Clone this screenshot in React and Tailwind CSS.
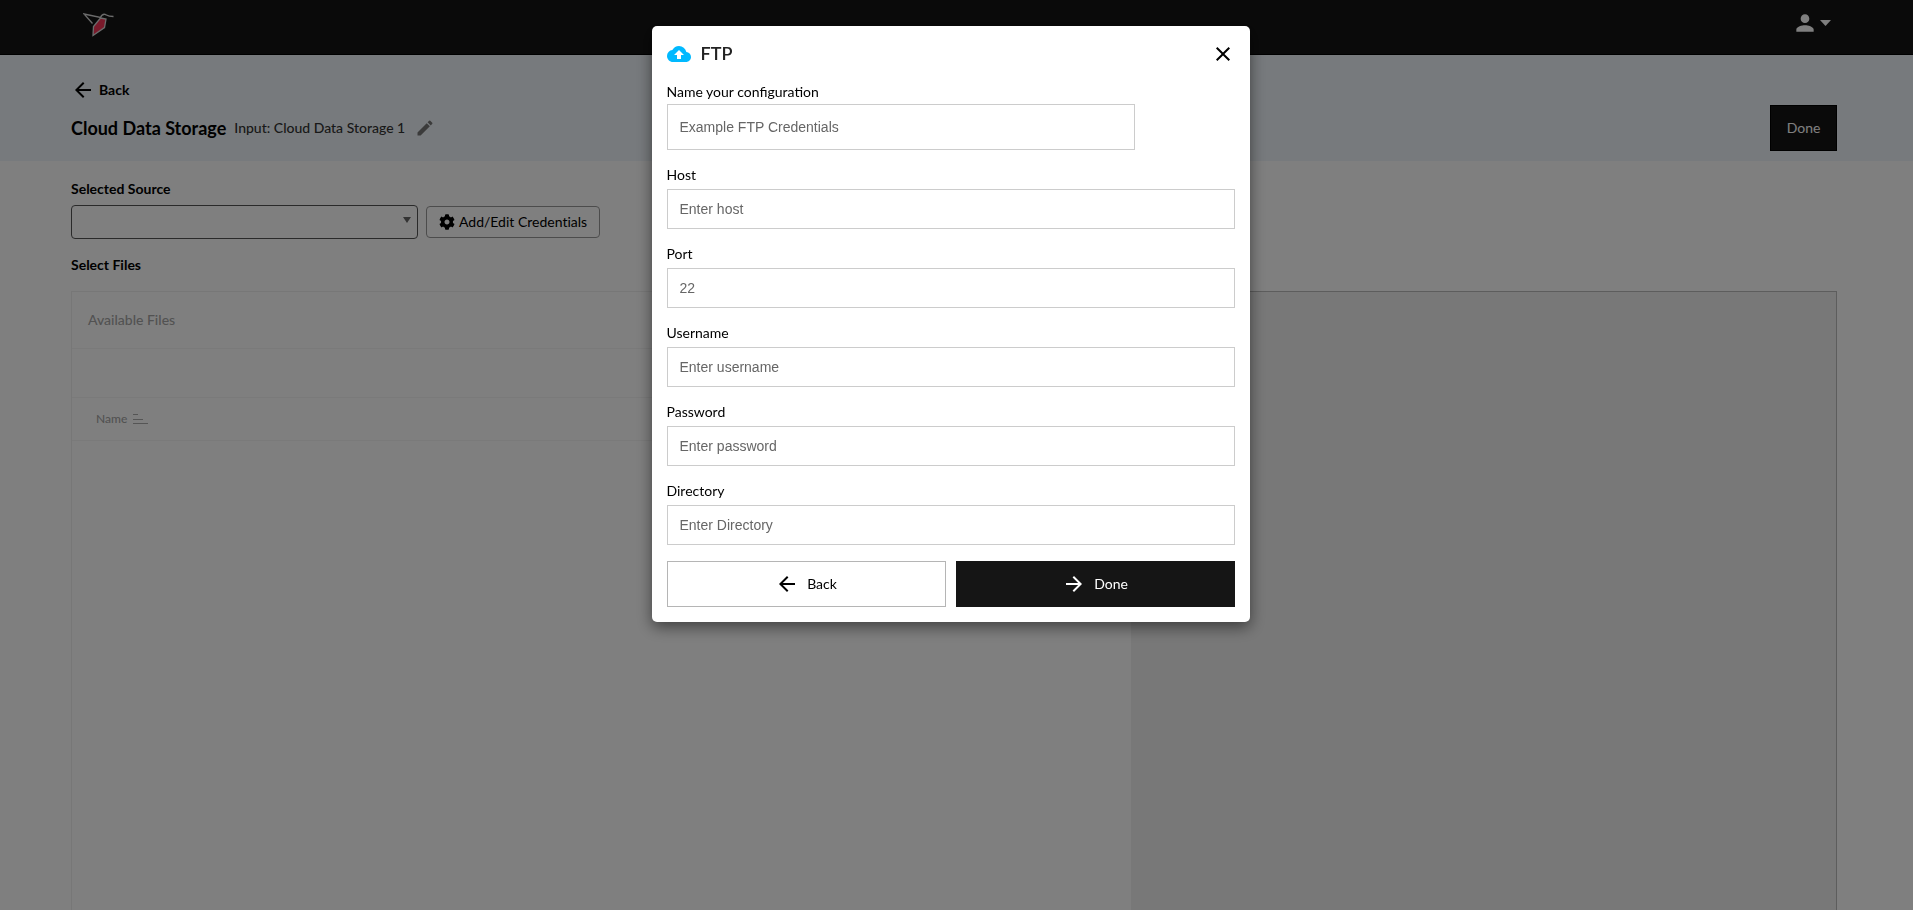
import React, { useState } from 'react';
import { FaCog } from 'react-icons/fa';
import {
  MdArrowBack,
  MdArrowForward,
  MdClose,
  MdCloudUpload,
  MdEdit,
  MdPerson,
} from 'react-icons/md';

const fields = [
  { id: 'host', label: 'Host', placeholder: 'Enter host', type: 'text' },
  { id: 'port', label: 'Port', placeholder: '22', type: 'text' },
  { id: 'username', label: 'Username', placeholder: 'Enter username', type: 'text' },
  { id: 'password', label: 'Password', placeholder: 'Enter password', type: 'password' },
  { id: 'directory', label: 'Directory', placeholder: 'Enter Directory', type: 'text' },
];

const Logo = () => (
  <svg viewBox="0 0 32 24" className="w-8 h-6" fill="none">
    <path d="M17.5 5L23 6L21.5 14.5L10 22.5L10.5 13.5Z" fill="#f43557" stroke="#d8d8d8" strokeWidth="1.3" />
    <path d="M9.5 10.5L1 1L17.5 4.5C18.5 2 20 1 22 1.3C24 2 24 3.5 30.5 3.5" stroke="#d8d8d8" strokeWidth="1.3" />
  </svg>
);

const Navbar = () => (
  <nav className="flex items-center justify-between h-[55px] bg-[#151515] border-b border-black pl-[83px] pr-[82px] pb-1">
    <a href="#" aria-label="Home">
      <Logo />
    </a>
    <button type="button" aria-label="Account" className="flex items-center gap-0.5 pb-1 text-white">
      <MdPerson className="w-[26px] h-[26px]" />
      <svg viewBox="0 0 11 6" className="w-[11px] h-1.5" fill="currentColor">
        <path d="M0 0h11L5.500 6z" />
      </svg>
    </button>
  </nav>
);

const PageHeader = () => (
  <header className="bg-[#eff5fa] h-[106px] pl-[71px] pr-[76px] flex justify-between">
    <div className="pt-[23px]">
      <a href="#" className="flex items-center gap-1 h-6 text-sm font-bold text-black">
        <MdArrowBack className="w-6 h-6" />
        Back
      </a>
      <div className="flex items-center mt-2.5 h-8">
        <h1 className="text-lg font-bold text-black">Cloud Data Storage</h1>
        <span className="ml-2 text-sm font-medium text-[#333]">Input: Cloud Data Storage 1</span>
        <button type="button" aria-label="Edit name" className="ml-2.5 text-[#777]">
          <MdEdit className="w-5 h-5" />
        </button>
      </div>
    </div>
    <button type="button" className="mt-[50px] w-[67px] h-[46px] bg-[#151515] border border-black text-white text-sm">
      Done
    </button>
  </header>
);

const SourcePicker = () => (
  <section>
    <label htmlFor="source" className="block text-sm leading-5 font-bold text-black">Selected Source</label>
    <div className="flex items-center gap-2 mt-1.5">
      <div className="relative w-[347px]">
        <select id="source" className="appearance-none block w-full h-[34px] rounded border border-[#555] bg-white" />
        <svg viewBox="0 0 8 6" className="absolute right-[7px] top-3 w-2 h-1.5 pointer-events-none">
          <path d="M0 0h8L4 6z" fill="#666" />
        </svg>
      </div>
      <button
        type="button"
        className="flex items-center gap-1 h-8 px-3 rounded-sm border border-[#999] text-sm text-black [font-variant-ligatures:none]"
      >
        <FaCog className="w-4 h-4" />
        Add/Edit Credentials
      </button>
    </div>
  </section>
);

const FileBrowser = () => (
  <section className="flex flex-col grow">
    <h2 className="mt-4 text-sm leading-5 font-bold text-black">Select Files</h2>
    <div className="flex grow mt-4">
      <div className="w-3/5 border-t border-l border-[#efefef] text-[#a5a5a5]">
        <div className="flex items-center h-[57px] px-4 text-sm font-medium border-b border-[#f4f4f4]">Available Files</div>
        <div className="h-[49px] border-b border-[#f4f4f4]" />
        <table className="w-full">
          <thead>
            <tr className="h-[42px] border-b border-[#f4f4f4]">
              <th className="pl-6 text-left text-xs font-medium">
                <span className="flex items-center gap-1.5">
                  Name
                  <svg viewBox="0 0 15 12" className="w-[15px] h-3" stroke="#aaa">
                    <path d="M0 1.500h5M0 6.500h10M0 10.500h15" />
                  </svg>
                </span>
              </th>
            </tr>
          </thead>
        </table>
      </div>
      <div className="w-2/5 bg-[#f0f0f0] border-t border-r border-[#bbb]" />
    </div>
  </section>
);

const FtpDialog = ({ onClose }) => {
  const [values, setValues] = useState({});

  const handleChange = (e) => {
    setValues({ ...values, [e.target.id]: e.target.value });
  };

  const inputClass =
    "block border border-[#ccc] bg-white px-3 text-sm text-black placeholder:text-[#666] font-['Liberation_Sans',sans-serif]";

  return (
    <div className="fixed inset-0 bg-black/50 flex items-start justify-center pt-[26px] pr-3">
      <div
        role="dialog"
        aria-labelledby="dialog-title"
        className="w-[598px] bg-white rounded-[5px] px-[15px] pb-[15px] shadow-[0_5px_15px_rgba(0,0,0,0.5)]"
      >
        <div className="flex items-center h-14">
          <MdCloudUpload className="w-6 h-6 text-[#00b9ff]" />
          <h2 id="dialog-title" className="ml-2.5 pb-0.5 text-lg font-semibold text-[#222]">FTP</h2>
          <button type="button" aria-label="Close" onClick={onClose} className="ml-auto text-black">
            <MdClose className="w-6 h-6" />
          </button>
        </div>
        <form onSubmit={(e) => e.preventDefault()}>
          <label htmlFor="name" className="block text-sm leading-5 text-black">Name your configuration</label>
          <input
            id="name"
            type="text"
            placeholder="Example FTP Credentials"
            value={values.name || ''}
            onChange={handleChange}
            className={`${inputClass} w-[468px] h-[46px] mt-0.5`}
          />
          {fields.map((field) => (
            <div key={field.id} className="mt-[15px]">
              <label htmlFor={field.id} className="block text-sm leading-5 text-black">{field.label}</label>
              <input
                id={field.id}
                type={field.type}
                placeholder={field.placeholder}
                value={values[field.id] || ''}
                onChange={handleChange}
                className={`${inputClass} w-full h-10 mt-1`}
              />
            </div>
          ))}
          <div className="grid grid-cols-2 gap-2.5 mt-4 text-sm">
            <button type="button" className="flex items-center justify-center gap-2 h-[46px] border border-[#b5b5b5] text-black">
              <MdArrowBack className="w-6 h-6" />
              Back
            </button>
            <button type="submit" className="flex items-center justify-center gap-2 h-[46px] bg-[#151515] text-white">
              <MdArrowForward className="w-6 h-6" />
              Done
            </button>
          </div>
        </form>
      </div>
    </div>
  );
};

const App = () => {
  const [open, setOpen] = useState(true);

  return (
    <div className="min-h-screen flex flex-col bg-white font-['Lato',sans-serif]">
      <Navbar />
      <PageHeader />
      <main className="flex flex-col grow pl-[71px] pr-[76px] pt-[18px]">
        <SourcePicker />
        <FileBrowser />
      </main>
      {open && <FtpDialog onClose={() => setOpen(false)} />}
    </div>
  );
};

export default App;
